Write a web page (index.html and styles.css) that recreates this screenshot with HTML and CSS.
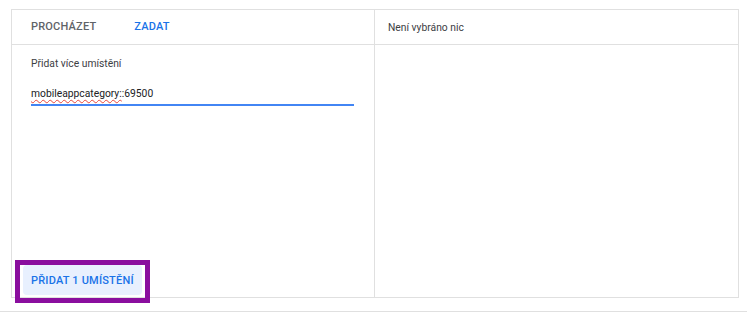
FILE: index.html
```html
<!DOCTYPE html>
<html lang="cs">
<head>
<meta charset="utf-8">
<title>Umístění</title>
<link rel="stylesheet" href="styles.css">
</head>
<body>
<div class="page">
  <div class="panel">
    <div class="col col-left">
      <div class="col-head tabs">
        <div class="tab">PROCHÁZET</div>
        <div class="tab tab-active">ZADAT</div>
      </div>
      <div class="col-body left-body">
        <div class="label">Přidat více umístění</div>
        <div class="input"><span class="misspelled">mobileappcategory:</span>:69500</div>
        <div class="btn-wrap">
          <button class="btn" type="button">PŘIDAT 1 UMÍSTĚNÍ</button>
          <span class="highlight"></span>
        </div>
      </div>
    </div>
    <div class="col col-right">
      <div class="col-head right-head">Není vybráno nic</div>
      <div class="col-body"></div>
    </div>
  </div>
  <div class="rule"></div>
</div>
</body>
</html>
```

FILE: styles.css
```css
html, body {
  margin: 0;
  padding: 0;
  background: #ffffff;
}

body {
  font-family: Roboto, "Liberation Sans", Arial, sans-serif;
  font-size: 10.3px;
  color: #3c4043;
}

.page {
  padding-top: 9px;
}

.panel {
  margin-left: 11px;
  width: 728px;
  height: 289px;
  box-sizing: border-box;
  border: 1px solid #e0e0e0;
  display: grid;
  grid-template-columns: 363px 1fr;
}

.col {
  display: flex;
  flex-direction: column;
  min-height: 0;
}

.col-left {
  border-right: 1px solid #e0e0e0;
}

.col-head {
  height: 35px;
  box-sizing: border-box;
  border-bottom: 1px solid #e0e0e0;
  display: flex;
  align-items: center;
  flex: none;
}

.tab {
  padding: 0 19px;
  font-size: 11px;
  font-weight: 500;
  letter-spacing: 0.2px;
  color: #5f6368;
  line-height: 34px;
}

.tab-active {
  color: #1a73e8;
}

.right-head {
  padding-left: 13px;
  color: #3c4043;
}

.col-body {
  flex: 1;
  min-height: 0;
}

.left-body {
  display: flex;
  flex-direction: column;
  padding: 11px 20px 0 19px;
}

.label {
  line-height: 16px;
  color: #3c4043;
}

.input {
  margin-top: 10px;
  padding: 4px 0 2px;
  line-height: 16px;
  color: #202124;
  border-bottom: 2px solid #4285f4;
}

.misspelled {
  text-decoration: underline wavy #e8453c;
  text-decoration-thickness: 1px;
  text-underline-offset: 2px;
}

.btn-wrap {
  margin-top: auto;
  margin-bottom: 2px;
  margin-left: -8px;
  align-self: flex-start;
  position: relative;
}

.btn {
  display: block;
  height: 30px;
  padding: 0 8px;
  border: none;
  border-radius: 4px;
  background: #e8f0fe;
  color: #1a73e8;
  font-family: Roboto, "Liberation Sans", Arial, sans-serif;
  font-size: 11px;
  font-weight: 500;
  letter-spacing: 0.2px;
}

.highlight {
  position: absolute;
  left: -8px;
  right: -8px;
  top: -5px;
  bottom: -8px;
  border: 5px solid #8a0e9e;
  pointer-events: none;
}

.rule {
  margin-top: 13px;
  height: 1px;
  background: #e0e0e0;
}
```
